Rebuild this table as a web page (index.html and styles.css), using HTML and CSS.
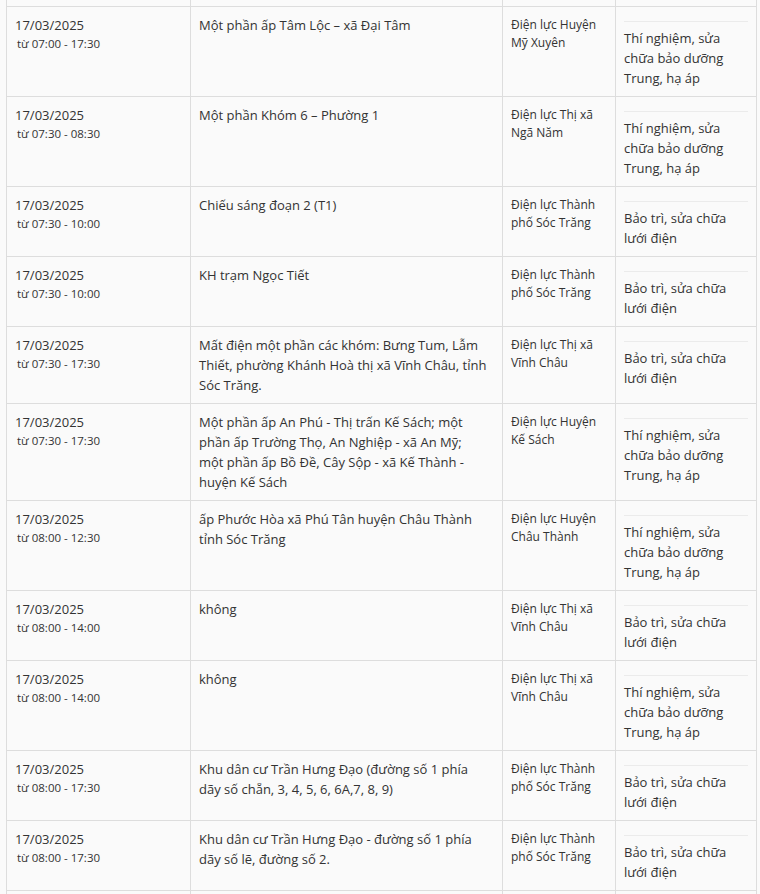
FILE: index.html
```html
<!DOCTYPE html>
<html lang="vi">
<head>
<meta charset="utf-8">
<title>Lịch cúp điện</title>
<link rel="stylesheet" href="styles.css">
</head>
<body>
<table class="tbl">
  <colgroup>
    <col class="c-date"><col class="c-area"><col class="c-unit"><col class="c-work">
  </colgroup>
  <tbody>
    <tr class="cut"><td></td><td></td><td></td><td></td></tr>
    <tr>
      <td><div class="date">17/03/2025</div><div class="time">từ 07:00 - 17:30</div></td>
      <td class="area">Một phần ấp Tâm Lộc – xã Đại Tâm</td>
      <td class="unit">Điện lực Huyện<br>Mỹ Xuyên</td>
      <td class="work"><div class="rule"></div>Thí nghiệm, sửa<br>chữa bảo dưỡng<br>Trung, hạ áp</td>
    </tr>
    <tr>
      <td><div class="date">17/03/2025</div><div class="time">từ 07:30 - 08:30</div></td>
      <td class="area">Một phần Khóm 6 – Phường 1</td>
      <td class="unit">Điện lực Thị xã<br>Ngã Năm</td>
      <td class="work"><div class="rule"></div>Thí nghiệm, sửa<br>chữa bảo dưỡng<br>Trung, hạ áp</td>
    </tr>
    <tr>
      <td><div class="date">17/03/2025</div><div class="time">từ 07:30 - 10:00</div></td>
      <td class="area">Chiếu sáng đoạn 2 (T1)</td>
      <td class="unit">Điện lực Thành<br>phố Sóc Trăng</td>
      <td class="work"><div class="rule"></div>Bảo trì, sửa chữa<br>lưới điện</td>
    </tr>
    <tr>
      <td><div class="date">17/03/2025</div><div class="time">từ 07:30 - 10:00</div></td>
      <td class="area">KH trạm Ngọc Tiết</td>
      <td class="unit">Điện lực Thành<br>phố Sóc Trăng</td>
      <td class="work"><div class="rule"></div>Bảo trì, sửa chữa<br>lưới điện</td>
    </tr>
    <tr>
      <td><div class="date">17/03/2025</div><div class="time">từ 07:30 - 17:30</div></td>
      <td class="area">Mất điện một phần các khóm: Bưng Tum, Lẫm<br>Thiết, phường Khánh Hoà thị xã Vĩnh Châu, tỉnh<br>Sóc Trăng.</td>
      <td class="unit">Điện lực Thị xã<br>Vĩnh Châu</td>
      <td class="work"><div class="rule"></div>Bảo trì, sửa chữa<br>lưới điện</td>
    </tr>
    <tr>
      <td><div class="date">17/03/2025</div><div class="time">từ 07:30 - 17:30</div></td>
      <td class="area">Một phần ấp An Phú - Thị trấn Kế Sách; một<br>phần ấp Trường Thọ, An Nghiệp - xã An Mỹ;<br>một phần ấp Bồ Đề, Cây Sộp - xã Kế Thành -<br>huyện Kế Sách</td>
      <td class="unit">Điện lực Huyện<br>Kế Sách</td>
      <td class="work"><div class="rule"></div>Thí nghiệm, sửa<br>chữa bảo dưỡng<br>Trung, hạ áp</td>
    </tr>
    <tr>
      <td><div class="date">17/03/2025</div><div class="time">từ 08:00 - 12:30</div></td>
      <td class="area">ấp Phước Hòa xã Phú Tân huyện Châu Thành<br>tỉnh Sóc Trăng</td>
      <td class="unit">Điện lực Huyện<br>Châu Thành</td>
      <td class="work"><div class="rule"></div>Thí nghiệm, sửa<br>chữa bảo dưỡng<br>Trung, hạ áp</td>
    </tr>
    <tr>
      <td><div class="date">17/03/2025</div><div class="time">từ 08:00 - 14:00</div></td>
      <td class="area">không</td>
      <td class="unit">Điện lực Thị xã<br>Vĩnh Châu</td>
      <td class="work"><div class="rule"></div>Bảo trì, sửa chữa<br>lưới điện</td>
    </tr>
    <tr>
      <td><div class="date">17/03/2025</div><div class="time">từ 08:00 - 14:00</div></td>
      <td class="area">không</td>
      <td class="unit">Điện lực Thị xã<br>Vĩnh Châu</td>
      <td class="work"><div class="rule"></div>Thí nghiệm, sửa<br>chữa bảo dưỡng<br>Trung, hạ áp</td>
    </tr>
    <tr>
      <td><div class="date">17/03/2025</div><div class="time">từ 08:00 - 17:30</div></td>
      <td class="area">Khu dân cư Trần Hưng Đạo (đường số 1 phía<br>dãy số chẵn, 3, 4, 5, 6, 6A,7, 8, 9)</td>
      <td class="unit">Điện lực Thành<br>phố Sóc Trăng</td>
      <td class="work"><div class="rule"></div>Bảo trì, sửa chữa<br>lưới điện</td>
    </tr>
    <tr>
      <td><div class="date">17/03/2025</div><div class="time">từ 08:00 - 17:30</div></td>
      <td class="area">Khu dân cư Trần Hưng Đạo - đường số 1 phía<br>dãy số lẽ, đường số 2.</td>
      <td class="unit">Điện lực Thành<br>phố Sóc Trăng</td>
      <td class="work"><div class="rule"></div>Bảo trì, sửa chữa<br>lưới điện</td>
    </tr>
    <tr class="cut-end"><td></td><td></td><td></td><td></td></tr>
  </tbody>
</table>
</body>
</html>
```

FILE: styles.css
```css
html, body {
  margin: 0;
  padding: 0;
  background: #fafafa;
}

body {
  font-family: "Open Sans", "Noto Sans", sans-serif;
  color: #333;
}

.tbl {
  border-collapse: collapse;
  table-layout: fixed;
  width: 750px;
  margin-left: 6px;
}

.c-date { width: 184px; }
.c-area { width: 312px; }
.c-unit { width: 113px; }
.c-work { width: 141px; }

.tbl td {
  border: 1px solid #ddd;
  padding: 8px;
  vertical-align: top;
  font-size: 13px;
  line-height: 20px;
  white-space: nowrap;
}

.tbl .cut td {
  border-top: 0;
  padding: 0;
  height: 6px;
}

.tbl .cut-end td {
  border-bottom: 0;
  padding: 0;
  height: 8px;
}

.date {
  font-size: 13px;
  line-height: 20px;
}

.time {
  font-size: 11.5px;
  line-height: 17px;
  padding-left: 2px;
}

.tbl td.unit {
  font-size: 12px;
  line-height: 18px;
  padding-top: 9px;
}

.rule {
  border-top: 1px solid #ebebeb;
  margin: 6px 0 6px;
}
```
